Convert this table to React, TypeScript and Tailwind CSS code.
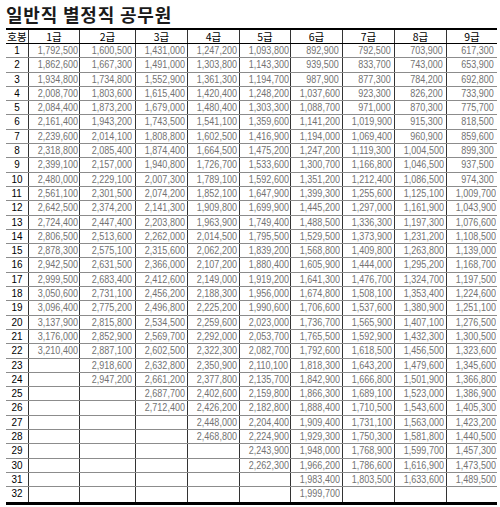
const GRADES = ["1급", "2급", "3급", "4급", "5급", "6급", "7급", "8급", "9급"];

// 급별 호봉 봉급액 (원)
const PAY: number[][] = [
  [1792500, 1862600, 1934800, 2008700, 2084400, 2161400, 2239600, 2318800, 2399100, 2480000, 2561100, 2642500, 2724400, 2806500, 2878300, 2942500, 2999500, 3050600, 3096400, 3137900, 3176000, 3210400],
  [1600500, 1667300, 1734800, 1803600, 1873200, 1943200, 2014100, 2085400, 2157000, 2229100, 2301500, 2374200, 2447400, 2513600, 2575100, 2631500, 2683400, 2731100, 2775200, 2815800, 2852900, 2887100, 2918600, 2947200],
  [1431000, 1491000, 1552900, 1615400, 1679000, 1743500, 1808800, 1874400, 1940800, 2007300, 2074200, 2141300, 2203800, 2262000, 2315600, 2366000, 2412600, 2456200, 2496800, 2534500, 2569700, 2602500, 2632800, 2661200, 2687700, 2712400],
  [1247200, 1303800, 1361300, 1420400, 1480400, 1541100, 1602500, 1664500, 1726700, 1789100, 1852100, 1909800, 1963900, 2014500, 2062200, 2107200, 2149000, 2188300, 2225200, 2259600, 2292000, 2322300, 2350900, 2377800, 2402600, 2426200, 2448000, 2468800],
  [1093800, 1143300, 1194700, 1248200, 1303300, 1359600, 1416900, 1475200, 1533600, 1592600, 1647900, 1699900, 1749400, 1795500, 1839200, 1880400, 1919200, 1956000, 1990600, 2023000, 2053700, 2082700, 2110100, 2135700, 2159800, 2182800, 2204400, 2224900, 2243900, 2262300],
  [892900, 939500, 987900, 1037600, 1088700, 1141200, 1194000, 1247200, 1300700, 1351200, 1399300, 1445200, 1488500, 1529500, 1568800, 1605900, 1641300, 1674800, 1706600, 1736700, 1765500, 1792600, 1818300, 1842900, 1866300, 1888400, 1909400, 1929300, 1948000, 1966200, 1983400, 1999700],
  [792500, 833700, 877300, 923300, 971000, 1019900, 1069400, 1119300, 1166800, 1212400, 1255600, 1297000, 1336300, 1373900, 1409800, 1444000, 1476700, 1508100, 1537600, 1565900, 1592900, 1618500, 1643200, 1666800, 1689100, 1710500, 1731100, 1750300, 1768900, 1786600, 1803500],
  [703900, 743000, 784200, 826200, 870300, 915300, 960900, 1004500, 1046500, 1086500, 1125100, 1161900, 1197300, 1231200, 1263800, 1295200, 1324700, 1353400, 1380900, 1407100, 1432300, 1456500, 1479600, 1501900, 1523000, 1543600, 1563000, 1581800, 1599700, 1616900, 1633600],
  [617300, 653900, 692800, 733900, 775700, 818500, 859600, 899300, 937500, 974300, 1009700, 1043900, 1076600, 1108500, 1139000, 1168700, 1197500, 1224600, 1251100, 1276500, 1300500, 1323600, 1345600, 1366800, 1386900, 1405300, 1423200, 1440500, 1457300, 1473500, 1489500],
];

const STEPS = Array.from({ length: 32 }, (_, i) => i + 1);

const COLS = "grid grid-cols-[22px_51px_56px_52px_52px_51px_52px_52px_52px_51px]";

export default function App() {
  return (
    <div className="w-[500px] h-[507px] bg-white pl-[6px] pr-[3px] font-['Liberation_Sans','Noto_Sans_CJK_KR',sans-serif]">
      <h1 className="h-[28px] pt-[3px] text-[18px] leading-[22px] font-bold text-[#1a1a1a] tracking-[0.8px] font-['Noto_Sans_CJK_KR',sans-serif]">
        일반직 별정직 공무원
      </h1>

      <div className="border-t-2 border-b-[3px] border-black">
        <div className={`${COLS} h-[14px] border-b border-black text-[10.5px] leading-[13px] text-black`}>
          <div className="text-center font-['Noto_Sans_CJK_KR',sans-serif]">호봉</div>
          {GRADES.map((g) => (
            <div key={g} className="border-l border-[#333] text-center font-['Noto_Sans_CJK_KR',sans-serif]">
              {g}
            </div>
          ))}
        </div>

        {STEPS.map((step) => (
          <div
            key={step}
            className={`${COLS} h-[14.3px] ${step === 32 ? "" : "border-b border-[#8c8c8c]"} leading-[13.3px]`}
          >
            <div className="text-center text-[11px] text-black">
              <span className="inline-block scale-x-[0.9]">{step}</span>
            </div>
            {PAY.map((col, gi) => {
              const v = col[step - 1];
              return (
                <div key={gi} className="border-l border-[#333] text-right pr-[3px] text-[11px] text-[#737373]">
                  {v !== undefined && (
                    <span className="inline-block origin-right scale-x-[0.82]">
                      {v.toLocaleString("en-US")}
                    </span>
                  )}
                </div>
              );
            })}
          </div>
        ))}
      </div>
    </div>
  );
}
